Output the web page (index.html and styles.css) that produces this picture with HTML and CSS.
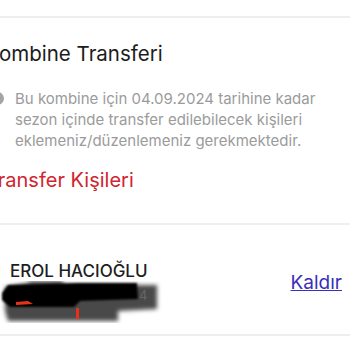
FILE: index.html
```html
<!DOCTYPE html>
<html lang="tr">
<head>
<meta charset="utf-8">
<link rel="stylesheet" href="styles.css">
</head>
<body>
<div class="divider top"></div>
<section class="transfer">
  <h2 class="title">Kombine Transferi</h2>
  <div class="info">
    <span class="info-icon"></span>
    <p class="info-text">Bu kombine için 04.09.2024 tarihine kadar<br>sezon içinde transfer edilebilecek kişileri<br>eklemeniz/düzenlemeniz gerekmektedir.</p>
  </div>
  <h3 class="subtitle">Transfer Kişileri</h3>
</section>
<div class="divider"></div>
<div class="person">
  <div class="person-info">
    <div class="person-name">EROL HACIOĞLU</div>
    <svg class="redact" width="165" height="42" viewBox="0 0 165 42">
      <defs>
        <filter id="blur" x="-20%" y="-40%" width="140%" height="180%"><feGaussianBlur stdDeviation="2"/></filter>
        <filter id="blur2" x="-20%" y="-40%" width="140%" height="180%"><feGaussianBlur stdDeviation="1"/></filter>
      </defs>
      <path d="M5 6 L28 2 L30 0 L62 0 L64 4 L157 4 L157 28 L118 30 L118 40 L8 40 L5 30 Z" fill="#4a4a4a" filter="url(#blur)"/>
      <text x="139" y="19" class="redact-num">4</text>
      <path d="M2 12 L8 4 L78 2 L137 2 L138 18 L80 20 L74 26 L10 26 L2 19 Z" fill="#000" filter="url(#blur2)"/>
      <path d="M16 21 L28 20 L33 23 L16 24 Z" fill="#e4321b"/>
      <rect x="76" y="27" width="3" height="11" fill="#e4321b"/>
    </svg>
  </div>
  <a class="remove" href="#">Kaldır</a>
</div>
<div class="divider"></div>
</body>
</html>
```
FILE: styles.css
```css
html, body {
  margin: 0;
  padding: 0;
  background: #ffffff;
}
body {
  font-family: Inter, "Open Sans", sans-serif;
  overflow: hidden;
  width: 350px;
  height: 350px;
}
.divider {
  height: 2px;
  background: #eeeeee;
}
.divider.top {
  margin-top: 16px;
}
.transfer {
  margin-left: -14px;
  padding: 22px 0 30px;
}
.title {
  margin: 0;
  font-size: 20.5px;
  line-height: 28px;
  font-weight: 400;
  color: #1c1c1c;
}
.info {
  display: flex;
  align-items: flex-start;
  gap: 11px;
  margin-top: 20px;
}
.info-icon {
  flex: none;
  width: 13px;
  height: 13px;
  border-radius: 50%;
  background: #a4a4a4;
  margin-top: 4px;
  margin-left: 5px;
}
.info-text {
  margin: 0;
  font-size: 15px;
  line-height: 21px;
  white-space: nowrap;
  color: #9b9b9b;
}
.subtitle {
  margin: 16px 0 0;
  font-size: 20px;
  line-height: 26px;
  font-weight: 400;
  color: #d0252f;
}
.person {
  display: flex;
  align-items: flex-start;
  justify-content: space-between;
  padding: 36px 8px 11px 10px;
}
.person-name {
  font-size: 17px;
  line-height: 20px;
  font-weight: 500;
  color: #1e1e1e;
}
.redact {
  display: block;
  margin-left: -10px;
}
.redact-num {
  font-family: Inter, sans-serif;
  font-size: 13px;
  fill: #666;
}
.remove {
  margin-top: 11px;
  font-size: 19px;
  line-height: 22px;
  color: #3a2fb8;
  text-decoration: underline;
}
```
